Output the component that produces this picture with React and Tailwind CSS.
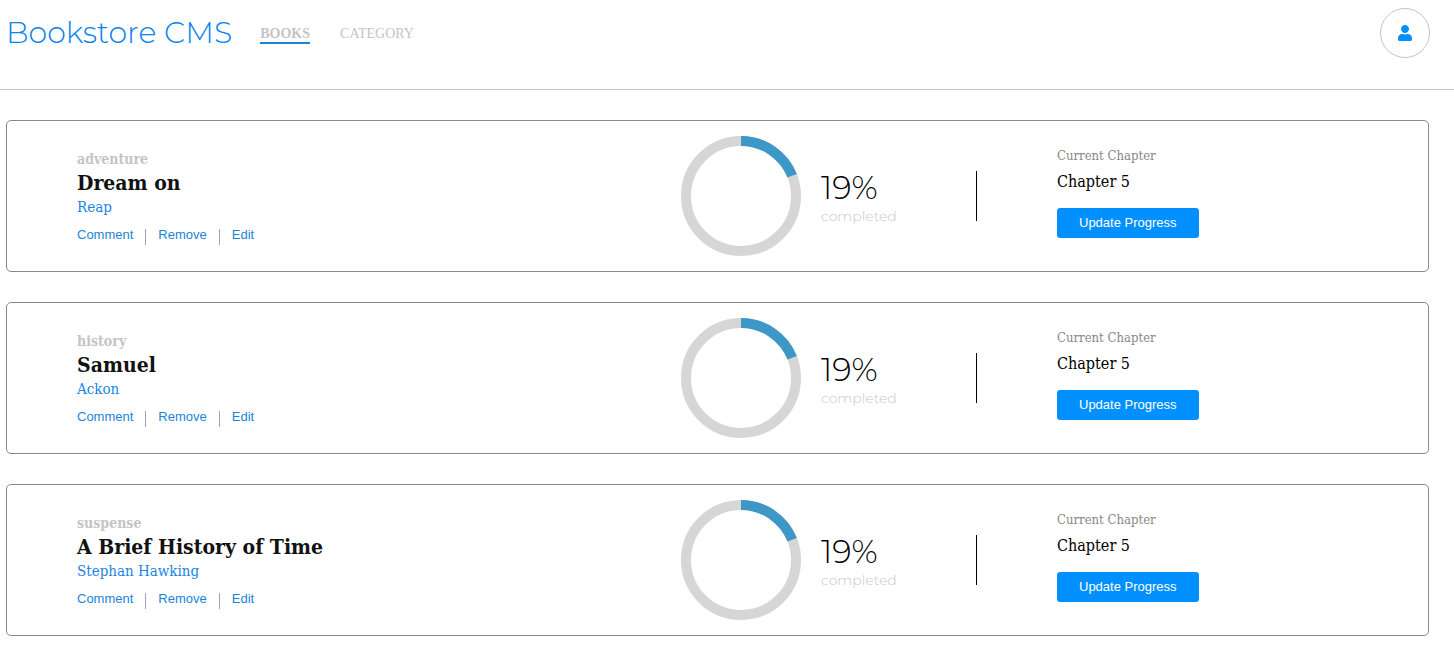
import React from 'react';
import { FaUser } from 'react-icons/fa';

const sans = "font-['Montserrat','Lato',sans-serif]";
const slab = "font-['Roboto_Slab','DejaVu_Serif_Condensed','DejaVu_Serif',serif]";
const arial = "font-['Liberation_Sans',Arial,sans-serif]";

const books = [
  { category: 'adventure', title: 'Dream on', author: 'Reap', progress: 19, chapter: 'Chapter 5' },
  { category: 'history', title: 'Samuel', author: 'Ackon', progress: 19, chapter: 'Chapter 5' },
  { category: 'suspense', title: 'A Brief History of Time', author: 'Stephan Hawking', progress: 19, chapter: 'Chapter 5' },
];

function Header() {
  return (
    <header className="flex h-[90px] items-start justify-between border-b border-[#c4c4c4] pt-2 pr-6 pl-1.5">
      <div className="flex h-[50px] items-center gap-7">
        <h1 className={`${sans} text-[30px] leading-10 font-light text-[#0a84ee]`}>Bookstore CMS</h1>
        <nav className="flex items-start gap-[30px] pt-1 font-['Liberation_Serif','Times_New_Roman',serif] text-sm leading-4 text-[#c4c4c4]">
          <a href="#books" className="border-b-2 border-[#1c86d1] font-bold">BOOKS</a>
          <a href="#category">CATEGORY</a>
        </nav>
      </div>
      <button aria-label="Account" className="flex size-[50px] items-center justify-center rounded-full border border-[#c4c4c4] text-[#0290ff]">
        <FaUser size={16} />
      </button>
    </header>
  );
}

function ProgressRing({ value }) {
  return (
    <svg viewBox="0 0 120 120" className="size-[120px] shrink-0 -rotate-90" fill="none" strokeWidth="10" role="img" aria-label="Progress">
      <circle cx="60" cy="60" r="55" stroke="#d6d6d6" />
      <circle cx="60" cy="60" r="55" stroke="#3e98c7" pathLength="100" strokeDasharray={`${value} 100`} />
    </svg>
  );
}

function Book({ book }) {
  return (
    <li className="grid grid-cols-[674fr_295fr_452fr] items-center rounded-[5px] border border-[#888] py-[15px]">
      <div className="pt-0.5 pl-[70px]">
        <p className={`${slab} text-sm leading-5 font-bold text-[#c4c4c4]`}>{book.category}</p>
        <h2 className={`${slab} text-[21px] leading-7 font-bold text-[#121212]`}>{book.title}</h2>
        <p className={`${slab} text-[15px] leading-5 text-[#1a84e6]`}>{book.author}</p>
        <div className={`${arial} mt-2 flex items-end text-[13px] leading-5 text-[#1a84d8]`}>
          <button className="pr-3">Comment</button>
          <span className="h-4 w-px bg-[#9aa5c4]" />
          <button className="px-3">Remove</button>
          <span className="h-4 w-px bg-[#9aa5c4]" />
          <button className="pl-3">Edit</button>
        </div>
      </div>
      <div className="flex items-center gap-5">
        <ProgressRing value={book.progress} />
        <div className={`${sans} pt-1`}>
          <p className="text-[32px] leading-9 font-light text-black">{book.progress}%</p>
          <p className="text-sm leading-5 font-light text-[#c8c8c8]">completed</p>
        </div>
      </div>
      <div className="flex items-center">
        <span className="h-[50px] w-px bg-black" />
        <div className="pb-2 pl-20">
          <p className={`${slab} text-[13px] leading-5 text-[#888]`}>Current Chapter</p>
          <p className={`${slab} mt-1 text-base leading-6 text-black`}>{book.chapter}</p>
          <button className={`${arial} mt-3.5 h-[30px] rounded-[3px] bg-[#0290ff] px-[22px] text-[13px] leading-5 text-white`}>
            Update Progress
          </button>
        </div>
      </div>
    </li>
  );
}

export default function App() {
  return (
    <div className="min-h-screen bg-white">
      <Header />
      <main className="pt-[30px] pr-[25px] pb-6 pl-1.5">
        <ul className="flex flex-col gap-[30px]">
          {books.map((book) => (
            <Book key={book.title} book={book} />
          ))}
        </ul>
      </main>
    </div>
  );
}
